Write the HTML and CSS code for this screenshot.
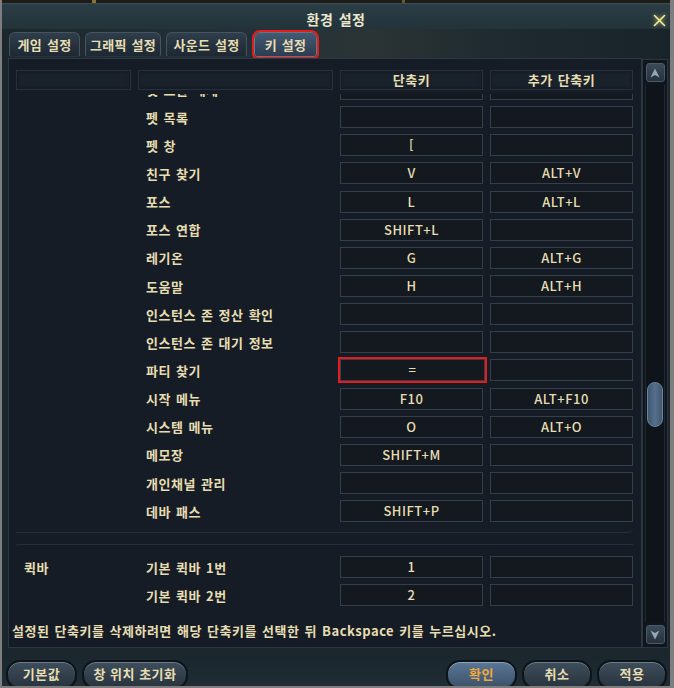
FILE: index.html
```html
<!DOCTYPE html>
<html lang="ko">
<head>
    <meta charset="UTF-8">
    <title>환경 설정</title>
    <link rel="stylesheet" href="styles.css">
</head>
<body>
    <div class="window">
        <div class="top-strip"></div>
        <div class="titlebar">
            <span class="title">환경 설정</span>
            <span class="close">
                <svg width="13" height="13" viewBox="0 0 13 13"><path d="M1.5 1.5 L11.5 11.5 M11.5 1.5 L1.5 11.5" stroke="#f4eca0" stroke-width="1.6" stroke-linecap="round"/></svg>
            </span>
        </div>

        <div class="tabs">
            <div class="tab tab-game">게임 설정</div>
            <div class="tab tab-gfx">그래픽 설정</div>
            <div class="tab tab-sound">사운드 설정</div>
            <div class="tab tab-key active">키 설정</div>
        </div>

        <div class="main">
            <div class="panel">
                <div class="row head">
                    <div class="hcell"></div>
                    <div class="hcell"></div>
                    <div class="hcell">단축키</div>
                    <div class="hcell">추가 단축키</div>
                </div>

                <div class="list">
                    <div class="group first">
                        <div class="row"><div class="cat"></div><div class="name">펫 소환 해제</div><div class="key"></div><div class="key"></div></div>
                        <div class="row"><div class="cat"></div><div class="name">펫 목록</div><div class="key"></div><div class="key"></div></div>
                        <div class="row"><div class="cat"></div><div class="name">펫 창</div><div class="key">[</div><div class="key"></div></div>
                        <div class="row"><div class="cat"></div><div class="name">친구 찾기</div><div class="key">V</div><div class="key">ALT+V</div></div>
                        <div class="row"><div class="cat"></div><div class="name">포스</div><div class="key">L</div><div class="key">ALT+L</div></div>
                        <div class="row"><div class="cat"></div><div class="name">포스 연합</div><div class="key">SHIFT+L</div><div class="key"></div></div>
                        <div class="row"><div class="cat"></div><div class="name">레기온</div><div class="key">G</div><div class="key">ALT+G</div></div>
                        <div class="row"><div class="cat"></div><div class="name">도움말</div><div class="key">H</div><div class="key">ALT+H</div></div>
                        <div class="row"><div class="cat"></div><div class="name">인스턴스 존 정산 확인</div><div class="key"></div><div class="key"></div></div>
                        <div class="row"><div class="cat"></div><div class="name">인스턴스 존 대기 정보</div><div class="key"></div><div class="key"></div></div>
                        <div class="row"><div class="cat"></div><div class="name">파티 찾기</div><div class="key selected">=</div><div class="key"></div></div>
                        <div class="row"><div class="cat"></div><div class="name">시작 메뉴</div><div class="key">F10</div><div class="key">ALT+F10</div></div>
                        <div class="row"><div class="cat"></div><div class="name">시스템 메뉴</div><div class="key">O</div><div class="key">ALT+O</div></div>
                        <div class="row"><div class="cat"></div><div class="name">메모장</div><div class="key">SHIFT+M</div><div class="key"></div></div>
                        <div class="row"><div class="cat"></div><div class="name">개인채널 관리</div><div class="key"></div><div class="key"></div></div>
                        <div class="row"><div class="cat"></div><div class="name">데바 패스</div><div class="key">SHIFT+P</div><div class="key"></div></div>
                    </div>

                    <div class="group">
                        <div class="row"><div class="cat">퀵바</div><div class="name">기본 퀵바 1번</div><div class="key">1</div><div class="key"></div></div>
                        <div class="row"><div class="cat"></div><div class="name">기본 퀵바 2번</div><div class="key">2</div><div class="key"></div></div>
                    </div>
                </div>

                <p class="hint">설정된 단축키를 삭제하려면 해당 단축키를 선택한 뒤 Backspace 키를 누르십시오.</p>
            </div>

            <div class="scrollbar">
                <div class="sb-btn">
                    <svg width="12" height="12" viewBox="0 0 12 12"><path d="M6 1.5 L10.5 10.5 L6 8 L1.5 10.5 Z" fill="#93a8b8"/></svg>
                </div>
                <div class="sb-track">
                    <div class="sb-thumb"></div>
                </div>
                <div class="sb-btn">
                    <svg width="12" height="12" viewBox="0 0 12 12"><path d="M6 10.5 L10.5 1.5 L6 4 L1.5 1.5 Z" fill="#93a8b8"/></svg>
                </div>
            </div>
        </div>

        <div class="bottom-bar">
            <div class="btn-group">
                <button class="btn btn-default">기본값</button>
                <button class="btn btn-reset">창 위치 초기화</button>
            </div>
            <div class="btn-group right">
                <button class="btn btn-ok">확인</button>
                <button class="btn btn-small">취소</button>
                <button class="btn btn-small">적용</button>
            </div>
        </div>
    </div>
</body>
</html>
```

FILE: styles.css
```css
* {
    box-sizing: border-box;
}

body {
    margin: 0;
    background-color: #808080;
    font-family: "Noto Sans CJK KR", "Noto Sans", sans-serif;
    font-size: 13px;
    font-weight: 700;
    letter-spacing: 0.5px;
    word-spacing: 1px;
    color: #e6deb2;
}

.window {
    width: 674px;
    height: 688px;
    border-left: 2px solid #7e7e7e;
    border-right: 4px solid #7e7e7e;
    border-bottom: 2px solid #7e7e7e;
    background: #1b262d;
    display: flex;
    flex-direction: column;
}

.top-strip {
    height: 3px;
    background: linear-gradient(90deg, #1e1c16 0 90px, #8a7430 90px 94px, #1e1c16 94px 400px, #6a5a2a 400px 403px, #1e1c16 403px);
}

.titlebar {
    height: 26px;
    background: linear-gradient(#2b3d45, #22333a);
    border-top: 1px solid #3a4c54;
    display: flex;
    justify-content: center;
    position: relative;
}

.title {
    font-size: 14px;
    line-height: 18px;
    padding-top: 6px;
    color: #ebe6cc;
}

.close {
    position: absolute;
    right: 4px;
    top: 8px;
    filter: drop-shadow(0 0 2px #c8b850);
}

.tabs {
    height: 29px;
    padding: 3px 0 0 7px;
    display: flex;
    gap: 5px;
    background: linear-gradient(90deg, #1c272d 0%, #25313a 40%, #2a3434 55%, #1f2a30 75%, #18232a 100%);
}

.tab {
    height: 25px;
    border: 1px solid #46545f;
    border-bottom-color: #27323a;
    border-radius: 6px 6px 3px 3px;
    background: linear-gradient(#2f3e4b, #1d2833);
    text-align: center;
    line-height: 23px;
    font-size: 13px;
    letter-spacing: 0.3px;
    color: #e6deb2;
}

.tab-game { width: 71px; }
.tab-gfx { width: 76px; }
.tab-sound { width: 81px; }

.tab-key {
    width: 63px;
    margin-left: 2px;
}

.tab.active {
    background: linear-gradient(#435a72, #2c3d50);
    border-color: #61758a;
    outline: 2px solid #e41c1c;
}

.main {
    height: 592px;
    display: flex;
    padding-left: 6px;
}

.panel {
    width: 634px;
    height: 590px;
    border: 1px solid #2c3846;
    background: #161c25;
    padding: 11px 8px 0 7px;
}

.row {
    display: grid;
    grid-template-columns: 115px 195px 143px 143px;
    column-gap: 7px;
    height: 28.15px;
    align-items: center;
}

.row.head {
    height: 20px;
    margin-bottom: 4px;
}

.hcell {
    height: 20px;
    border: 1px solid #27313d;
    background: #19212b;
    box-shadow: inset 0 0 3px #10151c;
    text-align: center;
    line-height: 18px;
}

.list {
    height: 521px;
    overflow: hidden;
}

.group {
    height: 80px;
    margin-left: -3px;
    padding: 8px 0 0 2px;
    border-left: 1px solid #252f3c;
    border-top: 1px solid #252f3c;
    border-top-left-radius: 6px;
}

.group.first {
    height: auto;
    margin-top: -19px;
    margin-bottom: 11px;
    padding: 0 0 7px 3px;
    border: none;
    border-bottom: 1px solid #263140;
    border-bottom-right-radius: 6px;
}

.cat {
    padding-left: 8px;
}

.name {
    padding-left: 8px;
    white-space: nowrap;
}

.key {
    height: 22px;
    border: 1px solid #353e4b;
    background: #141920;
    text-align: center;
    line-height: 20px;
    font-weight: 500;
}

.key.selected {
    outline: 2px solid #e41c1c;
    outline-offset: 0;
    width: 145px;
}

.hint {
    margin: 7px 0 0 -4px;
    line-height: 18px;
    white-space: nowrap;
}

.scrollbar {
    width: 26px;
    height: 589px;
    margin-top: 1px;
    border: 1px solid #2b3642;
    background: #11161d;
    padding: 3px 2px;
    display: flex;
    flex-direction: column;
    align-items: center;
    gap: 3px;
}

.sb-btn {
    width: 19px;
    height: 19px;
    border: 1px solid #4a5a68;
    border-radius: 3px;
    background: linear-gradient(#3a4a58, #26323d);
    display: flex;
    justify-content: center;
    align-items: center;
}

.sb-track {
    flex: 1;
    width: 20px;
    border-left: 1px solid #1f2832;
    border-right: 1px solid #1f2832;
    background: #0f141a;
    display: flex;
    justify-content: center;
}

.sb-thumb {
    width: 16px;
    height: 45px;
    margin-top: 297px;
    border-radius: 8px;
    border: 1px solid #6a84a0;
    background: linear-gradient(90deg, #405670, #55708c 50%, #405670);
}

.bottom-bar {
    height: 36px;
    padding: 10px 3px 0 4px;
    display: flex;
    justify-content: space-between;
    overflow: hidden;
    background: linear-gradient(#1a252c, #202d35);
}

.btn-group {
    display: flex;
    gap: 5px;
}

.btn {
    height: 30px;
    padding: 0 0 4px;
    border: 2px solid #0d1317;
    border-radius: 14px;
    box-shadow: inset 0 1px 0 #6a7c8c, inset 0 -1px 0 #1a232b;
    background: linear-gradient(#3f4e5c, #27333d);
    font-family: "Noto Sans CJK KR", "Noto Sans", sans-serif;
    font-size: 13px;
    font-weight: 700;
    letter-spacing: 0.5px;
    color: #e6deb2;
}

.btn-default { width: 71px; }
.btn-reset { width: 106px; }
.btn-small { width: 70px; }

.btn-ok {
    width: 71px;
    background: linear-gradient(#5a7795, #3b5069);
    box-shadow: inset 0 1px 0 #8aa4c0, inset 0 -1px 0 #2a3a4c;
    color: #f2aa3a;
}
```
